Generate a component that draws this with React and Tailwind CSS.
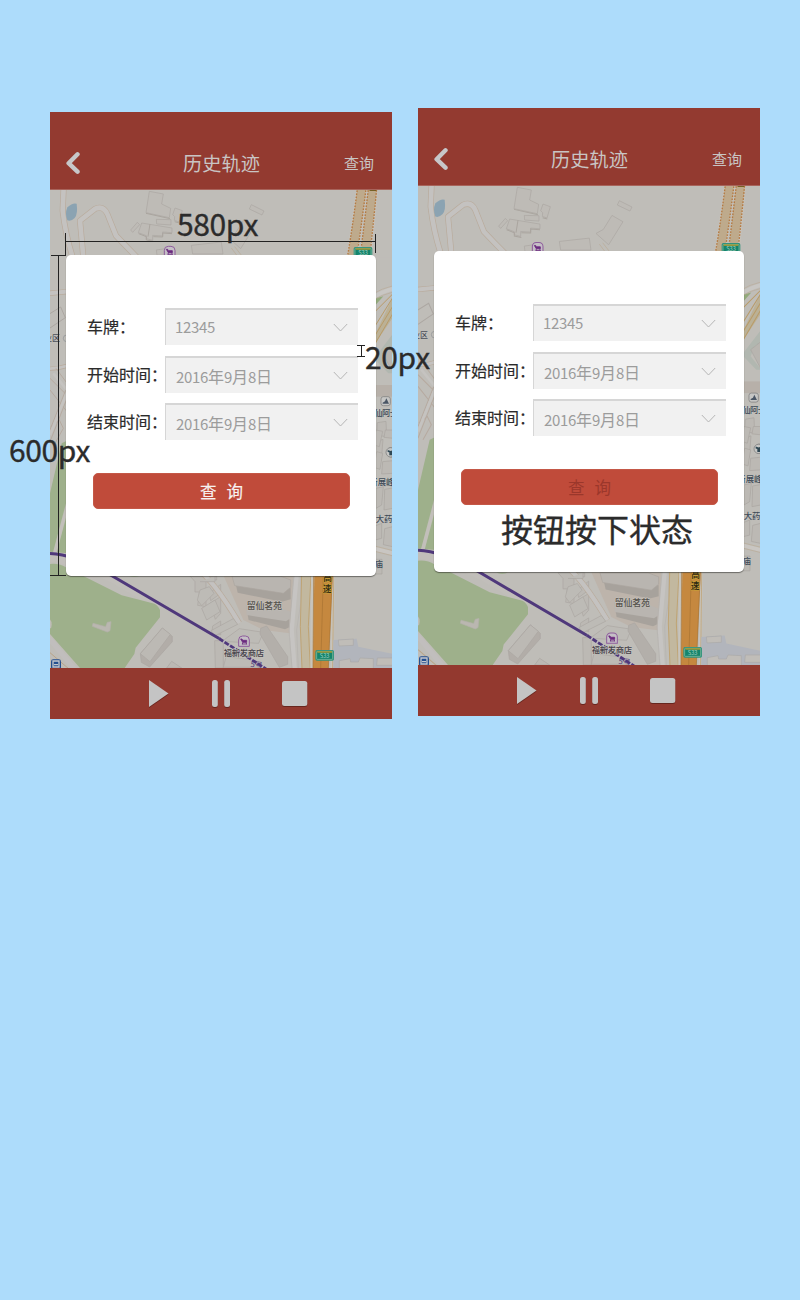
import React from 'react';

function Road({ d, w = 14, fill = '#c4c2c0', edge = '#b9ab9c' }) {
  return (
    <g fill="none" strokeLinejoin="round">
      <path d={d} stroke={edge} strokeWidth={w + 4} />
      <path d={d} stroke={fill} strokeWidth={w} />
    </g>
  );
}

function StoreIcon({ x, y }) {
  return (
    <g transform={`translate(${x} ${y})`}>
      <path d="M-16 15V-4a12 12 0 0 1 12-12H4A12 12 0 0 1 16-4V15Z" fill="#c5bfc6" stroke="#8e5c9c" strokeWidth="3" />
      <path d="M-10-7H-6L-4-3H8V3H-4ZM-4 3L-5 9M6 3L8 9M-6 8H9" stroke="#6c2b80" strokeWidth="2.5" fill="#6c2b80" />
    </g>
  );
}

function RoadBadge({ x, y }) {
  return (
    <g transform={`translate(${x} ${y})`}>
      <rect x="-28" y="-16" width="56" height="32" rx="5" fill="#2f927b" />
      <rect x="-24" y="-12" width="48" height="24" rx="2" fill="#15856c" stroke="#8fc0a5" strokeWidth="2" />
      <path d="M-22-10H22" stroke="#b49a2c" strokeWidth="4" />
      <text y="9" fontSize="17" fill="#a5d0c0" textAnchor="middle">S33</text>
    </g>
  );
}

function MapView({ className }) {
  return (
    <svg className={className} viewBox="50 190 342 478" preserveAspectRatio="none" fontFamily="Noto Sans CJK SC, sans-serif">
      <rect x="50" y="190" width="342" height="479" fill="#bfbdb8" />
      {/* north: lanes, pond, buildings and expressway */}
      <g transform="translate(42 104) scale(.33333)">
        <Road d="M65 250L62 320Q70 390 92 460" />
        <Road d="M124 460L114 350L160 314Q184 304 196 330L222 395Q255 430 285 460" />
        <path d="M76 310Q92 295 104 299Q108 330 98 342Q86 354 76 349Q68 330 76 310Z" fill="#8ba3b2" />
        <g fill="#bebbb6" stroke="#aba6a1" strokeWidth="2" strokeLinejoin="round">
          <path d="M322 262L364 270L359 300L386 313L382 341L312 326Z" />
          <path d="M399 312L421 320L411 354L397 349L398 338L392 332Z" />
          <path d="M286 355L293 362L272 385L266 378Z" />
          <path d="M343 346L387 347V363L344 360Z" />
          <path d="M299 357L390 372V386L362 384V396L332 394V409L313 404V395L289 386Z" />
          <path d="M628 302L666 321L660 333L622 315Z" />
          <path d="M606 346L639 365L596 434L558 400L580 388Z" />
          <path d="M448 424L538 414L543 450H452Z" />
          <path d="M343 438L370 434V454H345Z" />
        </g>
        <path d="M312 328L384 344M290 389L313 398V408L334 412M334 398L362 399V387L390 389M398 353L412 357M324 360L318 398" fill="none" stroke="#aaa59f" strokeWidth="3" />
        <path d="M568 432L586 456M578 428L600 456" stroke="#b9aa96" strokeWidth="2" fill="none" />
        <path d="M930 460Q946 360 960 255M970 460Q985 360 1004 255" stroke="#c6c1b9" strokeWidth="34" fill="none" />
        <path d="M930 460Q946 360 959 255M968 460Q980 360 992 255" stroke="#beaa8c" strokeWidth="26" fill="none" />
        <path d="M916 460Q933 360 946 255M944 460Q959 360 972 255M954 460Q967 360 979 255M983 460Q994 360 1004 255" stroke="#b57a42" strokeWidth="4" strokeDasharray="5 4" fill="none" />
        <path d="M1008 255H1050V460H988Q999 360 1008 255Z" fill="#bfbdb8" />
        <path d="M978 256H1003V261H985Z" fill="#756023" />
        <StoreIcon x={383} y={443} />
        <RoadBadge x={963} y={445} />
      </g>
      {/* west edge */}
      <g transform="translate(0 250) scale(.33333)">
        <Road d="M145 130Q175 128 210 124" w={12} />
        <Road d="M145 356Q175 356 210 345" w={8} />
        <path d="M148 192L182 171L196 203L150 234" fill="none" stroke="#aca7a2" strokeWidth="3" />
        <path d="M150 385L205 440M150 420L205 490M168 355L205 405M205 400L150 540M205 435L150 575M152 530L178 510L190 535L165 580" fill="none" stroke="#b6aaa0" strokeWidth="3" />
        <path d="M160 370L205 425M200 430L150 555" stroke="#c5c3c0" strokeWidth="8" />
        <text x="132" y="274" fontSize="24" fontWeight="500" fill="#4a4e58" stroke="#c9c8c4" strokeWidth="2" paintOrder="stroke">业区</text>
        <circle cx="200" cy="265" r="10" fill="none" stroke="#8c8f94" strokeWidth="2" />
      </g>
      {/* east edge */}
      <g transform="translate(210 250) scale(.33333)">
        <path d="M496 145L520 139L496 166Z" fill="#93aa7c" />
        <path d="M490 265L550 138V200L496 280Z" fill="#bbb196" />
        <path d="M490 190L550 130M494 230L550 140M496 255L550 166M496 280L550 188" stroke="#b99b68" strokeWidth="3" fill="none" />
        <path d="M486 145Q515 125 550 116" stroke="#c8c6c3" strokeWidth="12" fill="none" />
        <path d="M486 133Q515 115 550 107M486 152Q515 134 550 126" stroke="#baab98" strokeWidth="2" fill="none" />
        <path d="M496 320L550 250V290L530 300L518 330L550 370H535L496 330Z" fill="#b1b7b0" />
        <path d="M518 310L550 285V370Z" fill="#b8b5b0" stroke="#a9a6a1" strokeWidth="2" />
        <path d="M490 405H550V440H490Z" fill="#b7b0a9" />
        <g fill="#bcb9b4" stroke="#a9a5a0" strokeWidth="2">
          <path d="M502 518L528 514L530 560L500 556Z" />
          <path d="M498 575L519 568L514 632L496 640Z" />
        </g>
        <rect x="513" y="440" width="28" height="27" rx="7" fill="#c6c6c4" stroke="#777" strokeWidth="2" />
        <path d="M518 461H537L529 445L525 454L518 458Z" fill="#4a5665" />
        <text x="493" y="499" fontSize="25" fill="#384653" stroke="#c9c8c4" strokeWidth="2" paintOrder="stroke" fontWeight="500" letterSpacing="-2">仙阿士</text>
        <circle cx="544" cy="607" r="14" fill="#c6c6c4" stroke="#777" strokeWidth="2" />
        <path d="M535 600L544 603L552 600V616H540V607L535 606Z" fill="#2f4854" />
      </g>
      {/* south west: park */}
      <g transform="translate(0 430) scale(.33333)">
        <path d="M185 40L205 30V370L150 365V190Z" fill="#9eb08b" />
        <path d="M205 215L164 370" stroke="#c2bfba" strokeWidth="11" fill="none" />
        <path d="M140 383Q220 390 340 448L480 530" stroke="#c1beba" strokeWidth="22" fill="none" />
        <path d="M150 402Q178 399 200 413L250 438L365 496L458 520Q473 523 480 540V562L407 653L403 672L374 714H240L150 612Z" fill="#9eb08b" />
        <path d="M145 622L230 725" stroke="#c1bebd" strokeWidth="15" />
        <path d="M150 668L208 718" stroke="#b9a589" strokeWidth="3" />
        <path d="M150 568Q158 578 153 595H148Z" fill="#bfbdb8" />
        <path d="M385 437H420Q402 444 385 437Z" fill="#9eb08b" />
        <path d="M279 580L317 590L322 577L333 575L330 602L322 606L277 589Z" fill="#bab7b0" stroke="#b4b1aa" strokeWidth="2" />
        <g fill="#bcb9b4" stroke="#aba6a1" strokeWidth="2" strokeLinejoin="round">
          <path d="M487 594L517 619V635L449 711L424 697L421 671Z" fill="#b2ada8" />
          <path d="M487 594L511 613L450 695L421 671Z" />
          <path d="M515 694L545 714H500Z" />
          <path d="M570 438H650V450H618V530L593 526L598 486H585V455Z" />
          <path d="M627 490L662 463V490L632 512Z" />
          <path d="M630 520L662 500V550L646 568Z" />
          <path d="M638 588L662 573V615L636 605Z" />
          <path d="M644 632H670V714H646Z" />
        </g>
        <rect x="153" y="688" width="30" height="30" rx="7" fill="#244f90" />
        <path d="M159 693H177V711H159ZM162 704H174" fill="none" stroke="#c3c8ce" strokeWidth="4" />
      </g>
      {/* south east: housing estate, expressway */}
      <g transform="translate(200 430) scale(.33333)">
        <path d="M70 436H280L270 610L190 600L130 570Z" fill="#bdb4ab" />
        <Road d="M-10 415Q40 450 118 580" w={13} />
        <path d="M520 355L580 370" stroke="#c9c6c2" strokeWidth="12" />
        <path d="M520 347L580 362M520 363L580 378" stroke="#b9aa96" strokeWidth="2" />
        <g strokeLinejoin="round">
          <path d="M102 438L272 475V508L245 515L113 488Z" fill="#a7a29c" />
          <path d="M96 438H240L272 450V472L250 490L104 467Z" fill="#b9b5b0" stroke="#aaa59f" strokeWidth="2" />
          <path d="M138 527L268 565V592L255 598L146 570Z" fill="#a7a29c" />
          <path d="M138 522L250 537L272 545V565L258 574L140 555Z" fill="#b9b5b0" />
        </g>
        <g fill="#bdbbb6" stroke="#aba6a1" strokeWidth="2" strokeLinejoin="round">
          <path d="M0 480L28 470L42 490L5 527L-8 510Z" />
          <path d="M5 535L45 510L60 545L20 570Z" />
          <path d="M33 602L100 566L113 583L45 617Z" />
          <path d="M66 634L118 596L190 607L176 640Z" />
          <path d="M78 680L160 690L190 712H70Z" />
          <path d="M182 595L200 588L263 680V703L238 712L180 612Z" fill="#b3afaa" />
          <path d="M0 455H45V438" />
        </g>
        <path d="M290 436L275 600L284 716" stroke="#c6c4c2" strokeWidth="13" fill="none" />
        <path d="M282 436L267 600L276 716M302 436V520L290 600L295 716" stroke="#b5b2af" strokeWidth="2" fill="none" />
        <path d="M305 436H332L328 590L331 716H306L301 590Z" fill="#c2b89f" />
        <path d="M305 436L301 590L306 716M333 436L325 590L331 716" stroke="#bfa474" strokeWidth="3" fill="none" />
        <path d="M337 436L335 716M400 436L396 716" stroke="#c8c4bb" strokeWidth="8" />
        <path d="M343 436H398L385 716H339L341 560Z" fill="#c5883f" />
        <path d="M341 436L339 716M370 436L362 716M397 436L385 716" stroke="#a87332" strokeWidth="2" />
        <path d="M401 436L398 716" stroke="#bc9b66" strokeWidth="2" />
        <path d="M400 630L470 626L475 650L580 672V716H400Z" fill="#b2b5bc" />
        <g fill="#c0bdb8" stroke="#aaa9a8" strokeWidth="2">
          <path d="M415 630L460 627V646L417 648Z" />
          <path d="M418 692L450 686L452 696H475L480 684L520 686V716H418Z" />
          <path d="M532 684H580V706H530Z" />
        </g>
        <g fill="#bcb9b4" stroke="#a9a5a0" strokeWidth="2">
          <path d="M528 0L548 4L538 50L520 44Z" />
          <path d="M556 0H580V25L552 22Z" />
          <path d="M530 65L548 70L540 118L522 112Z" />
          <path d="M548 95L578 92V130L545 132Z" />
          <path d="M528 175L550 170L545 225L528 235Z" />
          <path d="M554 178L578 174V235L552 240Z" />
          <path d="M525 288L545 280V325L525 330Z" />
          <path d="M554 296L578 290V350L550 344Z" />
          <path d="M524 388H546V432H524Z" />
        </g>
        <circle cx="572" cy="67" r="14" fill="#c6c6c4" stroke="#777" strokeWidth="2" />
        <path d="M563 60L572 63L580 60V76H568V67L563 66Z" fill="#2f4854" />
        <g fill="#3d4a57" stroke="#c6c5c1" strokeWidth="2" paintOrder="stroke" fontSize="25" fontWeight="500">
          <text x="508" y="166">新展峰</text>
          <text x="527" y="277">大药房</text>
          <text x="524" y="412">庙</text>
        </g>
        <g fontSize="26" fontWeight="500" fill="#2a2411" stroke="#c79d37" strokeWidth="4" paintOrder="stroke">
          <text x="370" y="453">高</text>
          <text x="368" y="486">速</text>
        </g>
      </g>
      <path d="M50 553.5Q62 554 75 558.5Q96 566 111.5 575.5L220 639" fill="none" stroke="#4f387b" strokeWidth="3" />
      <path d="M219 638.5L266 669" fill="none" stroke="#b9b4bd" strokeWidth="2.8" />
      <path d="M219 638.5L266 669" fill="none" stroke="#4f387b" strokeWidth="2.8" strokeDasharray="5 1.6" />
      <g transform="translate(200 430) scale(.33333)">
        <StoreIcon x={132} y={634} />
        <RoadBadge x={374} y={676} />
        <text x="140" y="538" fontSize="27" fill="#55524c" stroke="#c4c1bc" strokeWidth="3" paintOrder="stroke" fontWeight="500" textLength="106">留仙茗苑</text>
        <text x="71" y="677" fontSize="25" fill="#454149" stroke="#c4c1bc" strokeWidth="3" paintOrder="stroke" fontWeight="500" textLength="121">福新发商店</text>
        <text x="151" y="710" fontSize="23" fill="#4f387b" transform="rotate(8 151 710)">5号</text>
      </g>
    </svg>
  );
}

function Field({ label, children, valueClass }) {
  return (
    <div className="flex h-[37px] items-center">
      <div className="-mt-px w-[78px] shrink-0 whitespace-nowrap text-[16px] leading-[36px] text-[#2b2b2b] [-webkit-text-stroke:0.2px_#2b2b2b]">
        {label}
      </div>
      <div className="flex h-[37px] w-[193px] items-center justify-between border-l border-t-2 border-[#d6d6d6] bg-[#f1f1f1] pl-[9px] pr-[10px]">
        <span className={`whitespace-nowrap text-[16px] leading-[20px] text-[#9c9c9c] ${valueClass}`}>{children}</span>
        <svg className="h-[9px] w-[15px]" viewBox="0 0 15 9" fill="none" stroke="#b5b5b5">
          <path d="M.8 1L7.5 8L14.2 1" />
        </svg>
      </div>
    </div>
  );
}

function Num({ children }) {
  return <span className="text-[15px] tracking-[-0.33px]">{children}</span>;
}

function DateValue() {
  return (
    <>
      <Num>2016</Num>年<Num>9</Num>月<Num>8</Num>日
    </>
  );
}

function Phone({ className, mapClass, buttonText }) {
  return (
    <section className={`flex w-[342px] shrink-0 flex-col ${className}`}>
      <header className="flex h-[78px] items-end justify-between border-b border-[#a8645b] bg-[#933a30] pb-[12px] pl-[16px] pr-[17px] text-[#c9c5c4]">
        <svg className="mb-[2px] h-[24px] w-[14px]" viewBox="0 0 14 24" fill="none" stroke="#c7c7c9" strokeWidth="4.4" strokeLinecap="round" strokeLinejoin="round">
          <path d="M11.5 3.3L2.6 12.2L11.5 20.7" />
        </svg>
        <h1 className="ml-[19px] text-[19.2px] leading-[28px]">历史轨迹</h1>
        <span className="mb-px mr-px text-[15px] leading-[26px]">查询</span>
      </header>
      <div className={`grid ${mapClass}`}>
        <MapView className="col-start-1 row-start-1 h-full w-full" />
        <div className="relative col-start-1 row-start-1 ml-[16px] mt-[65px] flex h-[321px] w-[310px] flex-col rounded-[5px] bg-white pl-[21px] pt-[53px] shadow-[0_1px_1px_rgba(40,40,35,0.55)]">
          <div className="flex flex-col gap-[10.5px]">
            <Field label="车牌：" valueClass="-mt-[2px]">
              <Num>12345</Num>
            </Field>
            <Field label="开始时间：" valueClass="pl-px pt-[2px]">
              <DateValue />
            </Field>
            <Field label="结束时间：" valueClass="pl-px pt-[2px]">
              <DateValue />
            </Field>
          </div>
          <button className={`ml-[6px] mt-[33px] flex h-[36px] w-[257px] items-center justify-center gap-[10px] rounded-[5px] border border-[#c45847] bg-[#c04b3a] text-[16.5px] ${buttonText}`}>
            <span>查</span>
            <span>询</span>
          </button>
        </div>
      </div>
      <footer className="h-[51px] bg-[#93392f] pl-[98px] pt-[11px]">
        <svg className="h-[30px] w-[162px] drop-shadow-[0.5px_1px_0.5px_rgba(50,15,10,0.45)]" viewBox="0 0 162 30" fill="#c4c4c4">
          <path d="M1 1L20.5 14.5L1 28Z" />
          <rect x="64" y="1" width="5.8" height="27" rx="2.5" />
          <rect x="76.2" y="1" width="5.8" height="27" rx="2.5" />
          <rect x="134" y="2" width="25.3" height="25" rx="2.5" />
        </svg>
      </footer>
    </section>
  );
}

const note = 'absolute whitespace-nowrap text-[#2b2b2b] leading-[32px] [-webkit-text-stroke:0.35px_#2b2b2b]';

export default function App() {
  return (
    <main className="relative flex h-[1300px] w-[800px] items-start gap-[26px] overflow-hidden bg-[#addcfb] pl-[50px] font-['Noto_Sans_CJK_SC',sans-serif]">
      <Phone className="mt-[112px]" mapClass="h-[478px]" buttonText="text-[#f7f2f1] [-webkit-text-stroke:0.15px_#f7f2f1]" />
      <Phone className="mt-[108px]" mapClass="h-[479px]" buttonText="text-[#9b372b]" />

      <svg className="absolute left-0 top-0 h-[600px] w-[400px]" viewBox="0 0 400 600" fill="none" stroke="#222" strokeWidth="1" shapeRendering="crispEdges">
        <path d="M65.5 233V255M65 241.5H376M375.5 234V253M51 255.5H66M58.5 255V575M50 575.5H66" />
        <path d="M357 345.5H365M357 356.5H365M361.5 345V357" />
      </svg>
      <div className={`${note} left-[177px] top-[207px] text-[30px] tracking-[-0.4px]`}>580px</div>
      <div className={`${note} left-[9px] top-[433px] text-[30px] tracking-[-0.4px]`}>600px</div>
      <div className={`${note} left-[365px] top-[340px] text-[30px] tracking-[-0.4px]`}>20px</div>
      <div className={`${note} left-[501px] top-[512px] text-[32px]`}>按钮按下状态</div>
    </main>
  );
}
